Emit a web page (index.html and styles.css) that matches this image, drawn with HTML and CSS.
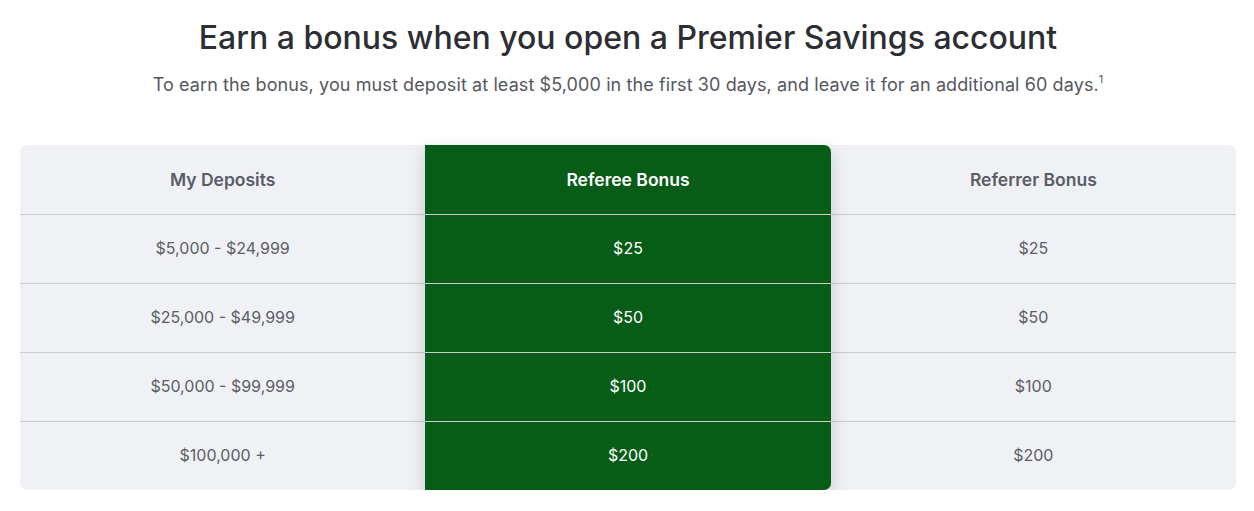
FILE: index.html
```html
<!DOCTYPE html>
<html lang="en">
<head>
<meta charset="utf-8">
<title>Premier Savings bonus</title>
<link rel="stylesheet" href="styles.css">
</head>
<body>
<main class="page">
  <h1 class="title">Earn a bonus when you open a Premier Savings account</h1>
  <p class="subtitle">To earn the bonus, you must deposit at least $5,000 in the first 30 days, and leave it for an additional 60 days.<sup>1</sup></p>
  <div class="table">
    <div class="col">
      <div class="cell head">My Deposits</div>
      <div class="cell">$5,000 - $24,999</div>
      <div class="cell">$25,000 - $49,999</div>
      <div class="cell">$50,000 - $99,999</div>
      <div class="cell">$100,000 +</div>
    </div>
    <div class="col featured">
      <div class="cell head">Referee Bonus</div>
      <div class="cell">$25</div>
      <div class="cell">$50</div>
      <div class="cell">$100</div>
      <div class="cell">$200</div>
    </div>
    <div class="col">
      <div class="cell head">Referrer Bonus</div>
      <div class="cell">$25</div>
      <div class="cell">$50</div>
      <div class="cell">$100</div>
      <div class="cell">$200</div>
    </div>
  </div>
</main>
</body>
</html>
```
FILE: styles.css
```css
* { box-sizing: border-box; }
html, body { margin: 0; padding: 0; background: #ffffff; }
body { font-family: Inter, "Noto Sans", sans-serif; color: #55575f; }
.page { padding: 18px 18px 0 20px; display: flex; flex-direction: column; align-items: center; }
.title {
  margin: 0;
  font-size: 32px;
  font-weight: 500;
  line-height: 40px;
  color: #2d2e33;
  letter-spacing: 0;
}
.subtitle {
  margin: 14px 0 0;
  font-size: 18px;
  line-height: 26px;
  letter-spacing: 0.1px;
  color: #55575f;
}
.subtitle sup { font-size: 11px; line-height: 0; vertical-align: 8px; }
.table {
  margin-top: 47px;
  width: 100%;
  display: flex;
  background: #f0f1f5;
  border-radius: 7px;
}
.col { flex: 1; display: flex; flex-direction: column; }
.cell {
  height: 69px;
  padding-bottom: 2px;
  display: flex;
  align-items: center;
  justify-content: center;
  font-size: 16px;
  color: #5b5d66;
  border-bottom: 1px solid #c9cad0;
}
.cell:last-child { border-bottom: 0; height: 68px; }
.head { height: 70px; padding-bottom: 1px; font-weight: 600; font-size: 17.5px; color: #5a5c67; }
.featured {
  background: #075c17;
  border-radius: 0 7px 7px 0;
  box-shadow: 0 6px 18px rgba(0, 0, 0, 0.16);
  position: relative;
  z-index: 1;
}
.featured .cell { color: #ffffff; border-bottom-color: #c9cac9; }
```
